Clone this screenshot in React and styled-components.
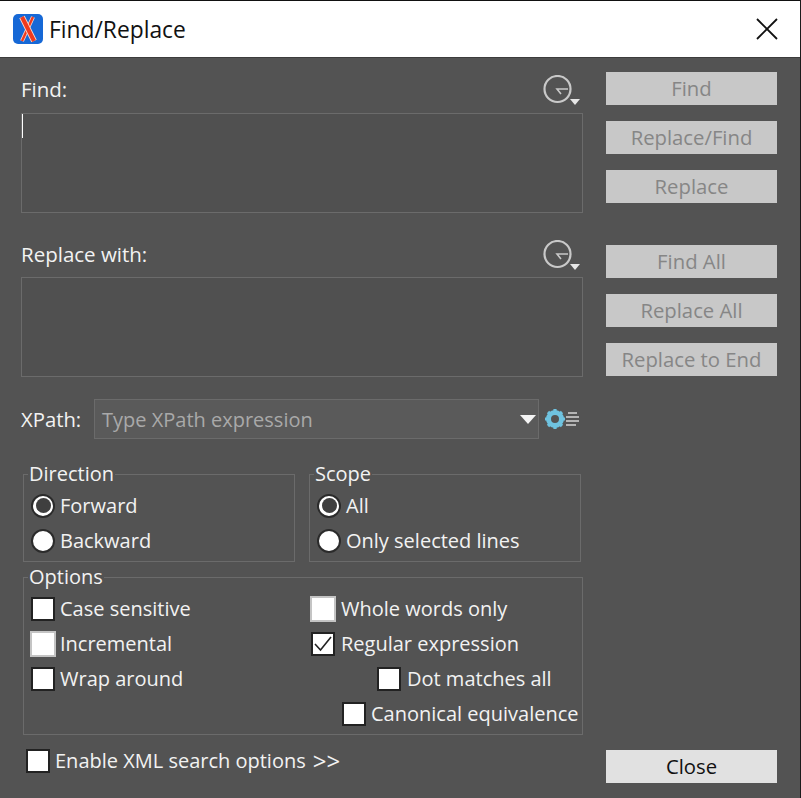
import styled, { createGlobalStyle } from 'styled-components';

const GlobalStyle = createGlobalStyle`
  html, body { margin: 0; padding: 0; background: #535353; }
  * { box-sizing: border-box; }
`;

const Window = styled.div`
  width: 801px;
  height: 798px;
  display: flex;
  flex-direction: column;
  background: #535353;
  color: #f2f2f2;
  font-family: "Open Sans", "Noto Sans", sans-serif;
  font-size: 20px;
  overflow: hidden;
  border-right: 1px solid #1c1c1c;
`;

const TitleBar = styled.header`
  height: 58px;
  flex: none;
  display: flex;
  align-items: center;
  padding: 0 22px 0 13px;
  background: #fff;
  border-top: 1px solid #111;
  border-bottom: 1px solid #3c3c3c;
  color: #111;
  font-size: 22.8px;
`;

const TitleText = styled.span`
  margin-left: 6px;
  flex: 1;
`;

const Body = styled.div`
  flex: 1;
  display: flex;
  padding: 0 23px 0 21px;
`;

const LeftColumn = styled.div`
  width: 562px;
  display: flex;
  flex-direction: column;
`;

const RightColumn = styled.div`
  width: 171px;
  margin-left: 23px;
  padding-top: 14px;
  display: flex;
  flex-direction: column;
`;

const FieldHeader = styled.div`
  height: ${p => p.$height}px;
  padding-top: ${p => p.$top}px;
  display: flex;
  justify-content: space-between;
  align-items: flex-start;
  font-size: 20.5px;
  line-height: 28px;
`;

const HistoryIcon = styled.svg`
  display: block;
  margin: 0 2px 0 0;
`;

const TextBox = styled.div`
  height: 100px;
  border: 1px solid #6b6b6b;
  background: #505050;
`;

const Caret = styled.div`
  width: 1px;
  height: 24px;
  background: #fff;
`;

const XPathRow = styled.div`
  margin-top: 22px;
  height: 40px;
  display: flex;
  align-items: center;
`;

const XPathLabel = styled.span`
  width: 73px;
  font-size: 20.3px;
`;

const Combo = styled.div`
  width: 445px;
  height: 40px;
  display: flex;
  align-items: center;
  justify-content: space-between;
  padding: 0 2px 0 7px;
  border: 1px solid #6b6b6b;
  background: #5a5a5a;
  color: #a9a9a9;
`;

const GroupRow = styled.div`
  margin: 22px 0 0 2px;
  width: 558px;
  display: grid;
  grid-template-columns: 272px 272px;
  column-gap: 14px;
`;

const Group = styled.fieldset`
  margin: ${p => p.$top || 0}px 0 0 ${p => p.$left || 0}px;
  padding: 0;
  min-width: 0;
  height: ${p => p.$height}px;
  border: 1px solid #6b6b6b;
`;

const Legend = styled.legend`
  margin-left: 4px;
  padding: 0 1px;
  line-height: 26px;
`;

const RadioList = styled.div`
  margin-top: 1px;
  padding-left: 7px;
  display: flex;
  flex-direction: column;
`;

const OptionRow = styled.div`
  height: 35px;
  display: flex;
  align-items: center;
  gap: ${p => p.$gap || 5}px;
  padding-left: ${p => p.$indent || 0}px;
  white-space: nowrap;
`;

const Radio = styled.span`
  width: 24px;
  height: 24px;
  flex: none;
  display: flex;
  align-items: center;
  justify-content: center;
  border-radius: 50%;
  background: #fff;
  border: 2px solid #2b2b2b;
  &::after {
    content: '';
    width: 15px;
    height: 15px;
    border-radius: 50%;
    background: ${p => (p.$checked ? '#3f3f3f' : 'transparent')};
  }
`;

const Box = styled.span`
  width: ${p => (p.$light ? 26 : 24)}px;
  height: ${p => (p.$light ? 26 : 24)}px;
  margin: 0 ${p => (p.$light ? -1 : 0)}px;
  flex: none;
  display: flex;
  align-items: center;
  justify-content: center;
  background: #fff;
  border: 2px solid ${p => (p.$light ? '#c4c4c4' : '#222')};
`;

const OptionsGrid = styled.div`
  margin-top: 1px;
  display: grid;
  grid-template-columns: 280px 1fr;
  padding-left: 7px;
`;

const OptionColumn = styled.div`
  display: flex;
  flex-direction: column;
`;

const BottomRow = styled(OptionRow)`
  margin: 8px 0 0 5px;
`;

const BottomLabel = styled.span`
  display: flex;
  align-items: center;
  gap: 7px;
`;

const Chevrons = styled.span`
  font-size: 24px;
  line-height: 1;
`;

const ActionButton = styled.button`
  height: 33px;
  flex: none;
  margin-top: ${p => p.$gap}px;
  padding: 0 0 2px;
  border: none;
  background: ${p => (p.$enabled ? '#e1e1e1' : '#c8c8c8')};
  color: ${p => (p.$enabled ? '#111' : '#868686')};
  font-family: inherit;
  font-size: 20.3px;
`;

const HistoryGlyph = () => (
  <HistoryIcon width="38" height="32" viewBox="0 0 38 32" fill="none">
    <circle cx="14.5" cy="14" r="13" stroke="#c9c9c9" strokeWidth="2.2" />
    <path d="M25 14H14l4 5" stroke="#c9c9c9" strokeWidth="1.6" />
    <path d="M27 24h10l-5 6z" fill="#e6e6e6" />
  </HistoryIcon>
);

const Logo = () => (
  <svg width="30" height="30" viewBox="0 0 30 30">
    <rect width="30" height="30" rx="5" fill="#1668d6" />
    <path d="M20 3L9 27" stroke="#f7d9cf" strokeWidth="4" />
    <path d="M20 3L9 27" stroke="#ee3a1e" strokeWidth="2.4" />
    <path d="M9 3l12 24" stroke="#f7d9cf" strokeWidth="6" />
    <path d="M9 3l12 24" stroke="#ee3a1e" strokeWidth="4" />
  </svg>
);

const CloseGlyph = () => (
  <svg width="22" height="22" viewBox="0 0 22 22">
    <path d="M1 1l20 20M21 1L1 21" stroke="#111" strokeWidth="1.8" />
  </svg>
);

const ComboArrow = () => (
  <svg width="16" height="9" viewBox="0 0 16 9">
    <path d="M0 0h16l-8 9z" fill="#f4f4f4" />
  </svg>
);

const GearLines = () => (
  <svg width="36" height="22" viewBox="0 0 36 22" style={{ marginLeft: 6 }}>
    <circle cx="10" cy="11" r="6.5" fill="none" stroke="#6fc3e0" strokeWidth="5" />
    <path
      d="M10 1v4M10 17v4M0 11h4M16 11h4M3 4l3 3M14 15l3 3M17 4l-3 3M6 15l-3 3"
      stroke="#6fc3e0"
      strokeWidth="3.2"
    />
    <path d="M23 5h9M21 9h13M21 13h13M21 17h10" stroke="#d5d5d5" strokeWidth="1.6" />
  </svg>
);

const Check = () => (
  <svg width="18" height="16" viewBox="0 0 18 16" fill="none">
    <path d="M1 8l5.5 6L17 1" stroke="#222" strokeWidth="1.6" />
  </svg>
);

const Option = ({ label, light, checked, indent, gap }) => (
  <OptionRow $indent={indent} $gap={gap}>
    <Box $light={light}>{checked && <Check />}</Box>
    {label}
  </OptionRow>
);

const RadioOption = ({ label, checked }) => (
  <OptionRow>
    <Radio $checked={checked} />
    {label}
  </OptionRow>
);

const App = () => (
  <Window>
    <GlobalStyle />
    <TitleBar>
      <Logo />
      <TitleText>Find/Replace</TitleText>
      <CloseGlyph />
    </TitleBar>
    <Body>
      <LeftColumn>
        <FieldHeader $height={55} $top={17}>
          Find:
          <HistoryGlyph />
        </FieldHeader>
        <TextBox>
          <Caret />
        </TextBox>
        <FieldHeader $height={64} $top={27}>
          Replace with:
          <HistoryGlyph />
        </FieldHeader>
        <TextBox />
        <XPathRow>
          <XPathLabel>XPath:</XPathLabel>
          <Combo>
            Type XPath expression
            <ComboArrow />
          </Combo>
          <GearLines />
        </XPathRow>
        <GroupRow>
          <Group $height={101}>
            <Legend>Direction</Legend>
            <RadioList>
              <RadioOption label="Forward" checked />
              <RadioOption label="Backward" />
            </RadioList>
          </Group>
          <Group $height={101}>
            <Legend>Scope</Legend>
            <RadioList>
              <RadioOption label="All" checked />
              <RadioOption label="Only selected lines" />
            </RadioList>
          </Group>
        </GroupRow>
        <Group $top={2} $left={2} $height={171}>
          <Legend>Options</Legend>
          <OptionsGrid>
            <OptionColumn>
              <Option label="Case sensitive" />
              <Option label="Incremental" light />
              <Option label="Wrap around" />
            </OptionColumn>
            <OptionColumn>
              <Option label="Whole words only" light gap={6} />
              <Option label="Regular expression" checked gap={6} />
              <Option label="Dot matches all" indent={66} gap={6} />
              <Option label="Canonical equivalence" indent={31} />
            </OptionColumn>
          </OptionsGrid>
        </Group>
        <BottomRow>
          <Box />
          <BottomLabel>
            Enable XML search options
            <Chevrons>&gt;&gt;</Chevrons>
          </BottomLabel>
        </BottomRow>
      </LeftColumn>
      <RightColumn>
        <ActionButton $gap={0}>Find</ActionButton>
        <ActionButton $gap={16}>Replace/Find</ActionButton>
        <ActionButton $gap={16}>Replace</ActionButton>
        <ActionButton $gap={42}>Find All</ActionButton>
        <ActionButton $gap={16}>Replace All</ActionButton>
        <ActionButton $gap={16}>Replace to End</ActionButton>
        <ActionButton $gap={374} $enabled>Close</ActionButton>
      </RightColumn>
    </Body>
  </Window>
);

export default App;
